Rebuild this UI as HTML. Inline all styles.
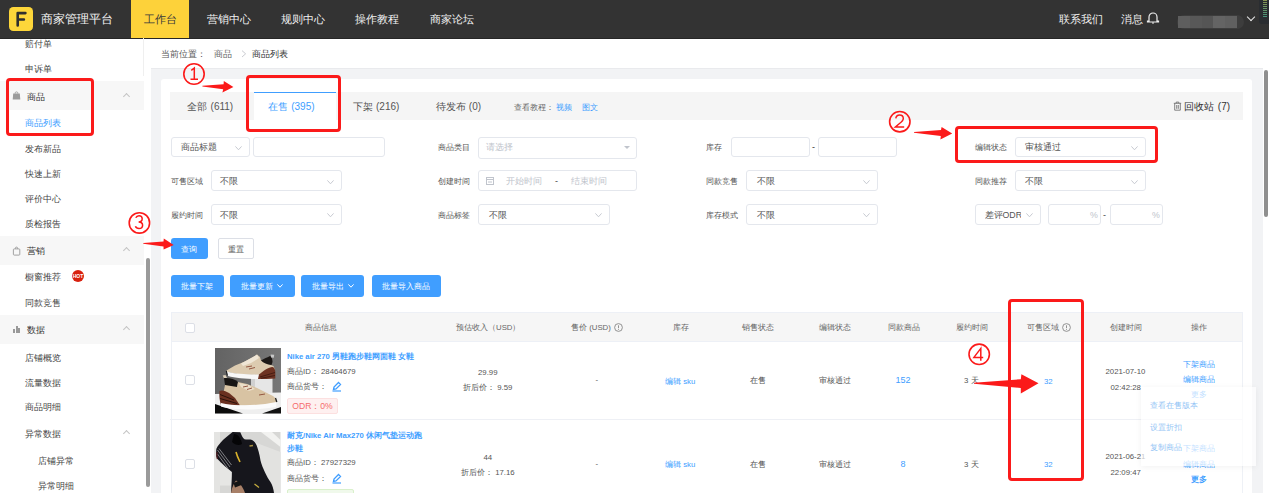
<!DOCTYPE html>
<html><head><meta charset="utf-8">
<style>
*{box-sizing:border-box;margin:0;padding:0}
html,body{width:1269px;height:493px;overflow:hidden;background:#fff}
body{position:relative;font-family:"Liberation Sans",sans-serif;color:#333}
.a{position:absolute}
.t{position:absolute;white-space:nowrap;line-height:12px;height:12px}
.hd{left:0;top:0;width:1269px;height:38px;background:#333}
.nav{color:#f2f2f2;font-size:10.6px;line-height:14px;height:14px;top:12px}
.sb{font-size:8.8px;color:#444}
.sbh{left:0;width:144px;background:#f7f7f7}
.chev{position:absolute;width:5px;height:5px;border-left:1px solid #c4c4c4;border-top:1px solid #c4c4c4;transform:rotate(45deg)}
.chevd{position:absolute;width:6px;height:6px;border-right:1px solid #b5b5b5;border-bottom:1px solid #b5b5b5;transform:rotate(45deg)}
.lb{font-size:8.1px;color:#555;margin-top:0.8px}
.inp{position:absolute;border:1px solid #e4e7ed;border-radius:3px;background:#fff;height:21px}
.sel{font-size:8.8px;color:#555}
.ph{color:#c0c4cc}
.btn{position:absolute;background:#409eff;border-radius:3px;color:#fff;font-size:7.9px;text-align:center;line-height:23px;height:21px}
.th{font-size:7.8px;color:#666}
.td{font-size:7.8px;color:#555}
.lk{color:#409eff}
.red{position:absolute;border:3px solid #fb1a1a;border-radius:4px}
</style></head><body>

<!-- HEADER -->
<div class="a hd" style="height:38.5px"></div>
<div class="a" style="left:0;top:37.5px;width:1269px;height:1px;background:#262626"></div>
<div class="a" style="left:9.3px;top:7px;width:23.5px;height:23.8px;background:#fdd63a;border-radius:4.3px"></div>
<svg class="a" style="left:0;top:0" width="40" height="38" viewBox="0 0 40 38"><path d="M17.7 25.5 V13.1 H25.4 M17.7 19.5 H23.9" fill="none" stroke="#2f2f2f" stroke-width="2.6" stroke-linecap="round" stroke-linejoin="round"/></svg>
<div class="t" style="left:41px;top:12px;height:14px;line-height:14px;font-size:12.2px;color:#f5f5f5">商家管理平台</div>
<div class="a" style="left:131px;top:0;width:58px;height:38px;background:#fdd23a"></div>
<div class="t nav" style="left:144px;color:#3a3a3a">工作台</div>
<div class="t nav" style="left:207px">营销中心</div>
<div class="t nav" style="left:281px">规则中心</div>
<div class="t nav" style="left:355px">操作教程</div>
<div class="t nav" style="left:430px">商家论坛</div>
<div class="t nav" style="left:1059px">联系我们</div>
<div class="t nav" style="left:1121px">消息</div>
<svg class="a" style="left:1146px;top:11px" width="14" height="14" viewBox="0 0 14 14"><path d="M3 10 V6 A4 4 0 0 1 11 6 V10 H12.5 V11 H1.5 V10 Z" fill="none" stroke="#eee" stroke-width="1.2"/><path d="M6 12 H8" stroke="#eee" stroke-width="1.2"/></svg>
<div class="a" style="left:1177px;top:15px;width:67px;height:14px;border-radius:7px;background:#3d3d3d"></div>
<div class="a" style="left:1178px;top:16px;width:59px;height:12px;background:linear-gradient(90deg,#5e5e5e 0,#5e5e5e 20%,#585858 20%,#585858 40%,#555 40%,#555 60%,#646464 60%,#646464 80%,#606060 80%)"></div>
<div class="chevd" style="left:1248px;top:14px;border-color:#e8e8e8;border-width:0 1.5px 1.5px 0;width:6px;height:6px"></div>
<div class="a" style="left:1259px;top:0;width:12px;height:24px;background:#2a2d31;border-radius:0 0 0 3px"></div>
<div class="a" style="left:1263px;top:0;width:4px;height:18px;background:linear-gradient(180deg,#8a9450,#3f8f7a)"></div><div class="a" style="left:1263px;top:0;width:4px;height:18px;background:repeating-linear-gradient(180deg,transparent 0,transparent 1px,#2a2d31 1px,#2a2d31 2px)"></div>

<!-- SIDEBAR --><div class="a" style="left:143px;top:38px;width:1px;height:38px;background:#efefef"></div>
<div class="t sb" style="left:25px;top:38px">赔付单</div>
<div class="t sb" style="left:25px;top:63px">申诉单</div>
<div class="a sbh" style="top:81px;height:29px"></div>
<div class="t sb" style="left:26.5px;top:90.5px;color:#333">商品</div>
<div class="chev" style="left:124px;top:94.3px"></div>
<div class="t sb lk" style="left:25px;top:117px">商品列表</div>
<div class="t sb" style="left:25px;top:143px">发布新品</div>
<div class="t sb" style="left:25px;top:168px">快速上新</div>
<div class="t sb" style="left:25px;top:193px">评价中心</div>
<div class="t sb" style="left:25px;top:218px">质检报告</div>
<div class="a sbh" style="top:236px;height:29px"></div>
<div class="t sb" style="left:26.7px;top:244.5px;color:#333">营销</div>
<div class="chev" style="left:124px;top:248.3px"></div>
<div class="t sb" style="left:25px;top:271px">橱窗推荐</div>
<div class="a" style="left:72px;top:270px;width:12px;height:12px;border-radius:50%;background:#d8210f"></div>
<div class="t" style="left:72px;top:271px;width:12px;height:10px;line-height:10px;font-size:5px;color:#fff;text-align:center;font-weight:bold">HOT</div>
<div class="t sb" style="left:25px;top:297px">同款竞售</div>
<div class="a sbh" style="top:315px;height:29px"></div>
<div class="t sb" style="left:26.7px;top:324px;color:#333">数据</div>
<div class="chev" style="left:124px;top:327.3px"></div>
<div class="t sb" style="left:25px;top:352px">店铺概览</div>
<div class="t sb" style="left:25px;top:377px">流量数据</div>
<div class="t sb" style="left:25px;top:401px">商品明细</div>
<div class="t sb" style="left:25px;top:428px">异常数据</div>
<div class="chev" style="left:124px;top:431.3px"></div>
<div class="t sb" style="left:38px;top:455px">店铺异常</div>
<div class="t sb" style="left:38px;top:480px">异常明细</div>
<div class="a" style="left:145.5px;top:258px;width:4px;height:229px;border-radius:2px;background:#9a9a9a"></div>



<svg class="a" style="left:12px;top:91px" width="9" height="9" viewBox="0 0 9 9"><path d="M3.2 2.6 V1.8 C3.2 0.6 5.8 0.6 5.8 1.8 V2.6" fill="none" stroke="#999" stroke-width="0.9"/><path d="M1.2 2.6 H7.8 L8.3 8.4 H0.7Z" fill="#9b9b9b"/></svg>
<svg class="a" style="left:12px;top:245.5px" width="9" height="10" viewBox="0 0 9 10"><path d="M3.4 2.8 V2 C3.4 0.8 5.6 0.8 5.6 2 V2.8" fill="none" stroke="#999" stroke-width="0.9"/><rect x="1.4" y="2.9" width="6.4" height="6.2" rx="0.8" fill="none" stroke="#999" stroke-width="0.9"/></svg>
<div class="a" style="left:13px;top:329px;width:1.8px;height:4px;background:#999"></div>
<div class="a" style="left:15.8px;top:326px;width:1.8px;height:7px;background:#999"></div>
<div class="a" style="left:18.2px;top:328px;width:1.8px;height:5px;background:#999"></div>

<div class="a" style="left:151px;top:68px;width:1112px;height:425px;background:#f2f3f5"></div>
<div class="t" style="left:161px;top:48px;font-size:8.8px;color:#555">当前位置：</div>
<div class="t" style="left:214px;top:48px;font-size:8.8px;color:#666">商品</div>
<svg class="a" style="left:241px;top:50px" width="6" height="8" viewBox="0 0 6 8"><path d="M1 0.6 L4.6 3.8 L1 7" fill="none" stroke="#c4c6cc" stroke-width="0.9"/></svg>
<div class="t" style="left:252px;top:48px;font-size:8.8px;color:#333">商品列表</div>
<div class="a" style="left:151px;top:68px;width:1112px;height:1px;background:#e9eaed"></div>
<div class="a" style="left:161px;top:79px;width:1091px;height:414px;background:#fff;border-radius:3px 3px 0 0"></div>
<div class="a" style="left:1263px;top:68px;width:6px;height:425px;background:#fff"></div>
<div class="a" style="left:1263.5px;top:70px;width:4px;height:147px;border-radius:2px;background:#8f8f8f"></div>

<!-- tabs -->
<div class="a" style="left:170px;top:92px;width:1073px;height:28px;background:#f5f5f5"></div>
<div class="a" style="left:254px;top:92px;width:82px;height:28px;background:#fff;border-top:1.5px solid #409eff"></div>
<div class="t" style="left:187px;top:100.5px;font-size:9.5px;color:#555">全部</div><div class="t" style="left:210.6px;top:100.5px;font-size:10px;color:#555">(611)</div>
<div class="t" style="left:267.5px;top:100.5px;font-size:9.5px;color:#409eff">在售</div><div class="t" style="left:291.2px;top:100.5px;font-size:10px;color:#409eff">(395)</div>
<div class="t" style="left:352.5px;top:100.5px;font-size:9.5px;color:#555">下架</div><div class="t" style="left:376px;top:100.5px;font-size:10px;color:#555">(216)</div>
<div class="t" style="left:436px;top:100.5px;font-size:9.5px;color:#555">待发布</div><div class="t" style="left:468.8px;top:100.5px;font-size:10px;color:#555">(0)</div>
<div class="t" style="left:514px;top:100.5px;font-size:8.3px;color:#666">查看教程：</div>
<div class="t lk" style="left:556px;top:100.5px;font-size:8.3px">视频</div>
<div class="t lk" style="left:581.5px;top:100.5px;font-size:8.3px">图文</div>
<svg class="a" style="left:1172.5px;top:101px" width="9" height="10" viewBox="0 0 9 10"><path d="M0.8 2.3H8.2M3.2 2.3V1.1H5.8V2.3M1.7 2.3V9.2H7.3V2.3M3.7 4V7.8M5.3 4V7.8" fill="none" stroke="#666" stroke-width="0.8"/></svg>
<div class="t" style="left:1184px;top:100.5px;font-size:9.5px;color:#333">回收站</div><div class="t" style="left:1217.8px;top:100.5px;font-size:10px;color:#333">(7)</div>

<!-- filters row1 -->
<div class="inp" style="left:170.5px;top:136.5px;width:79px;height:20.5px"></div>
<div class="t sel" style="left:181px;top:141px">商品标题</div>
<svg class="a" style="left:235.2px;top:145.7px;overflow:visible" width="7" height="4.2" viewBox="0 0 7 4.2"><path d="M0.4 0.4 L3.5 3.8000000000000003 L6.6 0.4" fill="none" stroke="#c0c4cc" stroke-width="0.9"/></svg>
<div class="inp" style="left:253px;top:136.5px;width:132px;height:20.5px"></div>
<div class="t lb" style="left:438px;top:141px">商品类目</div>
<div class="inp" style="left:478px;top:136.5px;width:159px;height:22px"></div>
<div class="t sel ph" style="left:486px;top:141px">请选择</div>
<div class="a" style="left:624px;top:146px;width:0;height:0;border-left:3px solid transparent;border-right:3px solid transparent;border-top:3.5px solid #c0c4cc"></div>
<div class="t lb" style="left:706px;top:141px">库存</div>
<div class="inp" style="left:730.5px;top:136.5px;width:79px;height:20.5px"></div>
<div class="t" style="left:812px;top:141px;font-size:9px">-</div>
<div class="inp" style="left:818px;top:136.5px;width:79px;height:20.5px"></div>
<div class="t lb" style="left:975px;top:141px">编辑状态</div>
<div class="inp" style="left:1014.5px;top:136.5px;width:131px;height:20.5px"></div>
<div class="t sel" style="left:1025px;top:141px">审核通过</div>
<svg class="a" style="left:1131.1px;top:145.7px;overflow:visible" width="7" height="4.2" viewBox="0 0 7 4.2"><path d="M0.4 0.4 L3.5 3.8000000000000003 L6.6 0.4" fill="none" stroke="#c0c4cc" stroke-width="0.9"/></svg>

<!-- filters row2 -->
<div class="t lb" style="left:170.5px;top:175px">可售区域</div>
<div class="inp" style="left:210.5px;top:170.3px;width:131px;height:21px"></div>
<div class="t sel" style="left:220px;top:175px">不限</div>
<svg class="a" style="left:327px;top:179.5px;overflow:visible" width="7" height="4.2" viewBox="0 0 7 4.2"><path d="M0.4 0.4 L3.5 3.8000000000000003 L6.6 0.4" fill="none" stroke="#c0c4cc" stroke-width="0.9"/></svg>
<div class="t lb" style="left:438px;top:175px">创建时间</div>
<div class="inp" style="left:478px;top:170.3px;width:159px;height:21px"></div>
<svg class="a" style="left:486px;top:177px" width="8" height="8" viewBox="0 0 8 8"><rect x="0.5" y="0.5" width="7" height="7" fill="none" stroke="#c0c4cc"/><path d="M0.5 2.5H7.5M2 5H6" stroke="#c0c4cc"/></svg>
<div class="t sel ph" style="left:506px;top:175px">开始时间</div>
<div class="t" style="left:555px;top:175px;font-size:9px;color:#444">-</div>
<div class="t sel ph" style="left:571px;top:175px">结束时间</div>
<div class="t lb" style="left:706px;top:175px">同款竞售</div>
<div class="inp" style="left:746px;top:170.3px;width:131.5px;height:21px"></div>
<div class="t sel" style="left:757px;top:175px">不限</div>
<svg class="a" style="left:863px;top:179.5px;overflow:visible" width="7" height="4.2" viewBox="0 0 7 4.2"><path d="M0.4 0.4 L3.5 3.8000000000000003 L6.6 0.4" fill="none" stroke="#c0c4cc" stroke-width="0.9"/></svg>
<div class="t lb" style="left:975px;top:175px">同款推荐</div>
<div class="inp" style="left:1014.5px;top:170.3px;width:131px;height:21px"></div>
<div class="t sel" style="left:1025px;top:175px">不限</div>
<svg class="a" style="left:1131.1px;top:179.5px;overflow:visible" width="7" height="4.2" viewBox="0 0 7 4.2"><path d="M0.4 0.4 L3.5 3.8000000000000003 L6.6 0.4" fill="none" stroke="#c0c4cc" stroke-width="0.9"/></svg>

<!-- filters row3 -->
<div class="t lb" style="left:170.5px;top:209px">履约时间</div>
<div class="inp" style="left:210.5px;top:204.2px;width:131px;height:21px"></div>
<div class="t sel" style="left:220px;top:209px">不限</div>
<svg class="a" style="left:327px;top:213.4px;overflow:visible" width="7" height="4.2" viewBox="0 0 7 4.2"><path d="M0.4 0.4 L3.5 3.8000000000000003 L6.6 0.4" fill="none" stroke="#c0c4cc" stroke-width="0.9"/></svg>
<div class="t lb" style="left:438px;top:209px">商品标签</div>
<div class="inp" style="left:478px;top:204.2px;width:131.5px;height:21px"></div>
<div class="t sel" style="left:489px;top:209px">不限</div>
<svg class="a" style="left:595px;top:213.4px;overflow:visible" width="7" height="4.2" viewBox="0 0 7 4.2"><path d="M0.4 0.4 L3.5 3.8000000000000003 L6.6 0.4" fill="none" stroke="#c0c4cc" stroke-width="0.9"/></svg>
<div class="t lb" style="left:706px;top:209px">库存模式</div>
<div class="inp" style="left:746px;top:204.2px;width:131.5px;height:21px"></div>
<div class="t sel" style="left:757px;top:209px">不限</div>
<svg class="a" style="left:863px;top:213.4px;overflow:visible" width="7" height="4.2" viewBox="0 0 7 4.2"><path d="M0.4 0.4 L3.5 3.8000000000000003 L6.6 0.4" fill="none" stroke="#c0c4cc" stroke-width="0.9"/></svg>
<div class="inp" style="left:974.5px;top:204.2px;width:66px;height:21px"></div>
<div class="t sel" style="left:984.5px;top:209px;width:36px;overflow:hidden">差评ODR</div>
<svg class="a" style="left:1026px;top:213.4px;overflow:visible" width="7" height="4.2" viewBox="0 0 7 4.2"><path d="M0.4 0.4 L3.5 3.8000000000000003 L6.6 0.4" fill="none" stroke="#c0c4cc" stroke-width="0.9"/></svg>
<div class="inp" style="left:1047.5px;top:204.2px;width:53px;height:21px"></div>
<div class="t sel ph" style="left:1090px;top:209px">%</div>
<div class="t" style="left:1103px;top:209px;font-size:9px;color:#444">-</div>
<div class="inp" style="left:1109.5px;top:204.2px;width:53px;height:21px"></div>
<div class="t sel ph" style="left:1152px;top:209px">%</div>

<!-- buttons -->
<div class="btn" style="left:170.5px;top:238px;width:37px">查询</div>
<div class="a" style="left:217.5px;top:238px;width:36.5px;height:21px;border:1px solid #dcdfe6;border-radius:2px"></div>
<div class="t" style="left:217.5px;top:243px;width:36.5px;text-align:center;font-size:7.9px;color:#555;margin-top:1px">重置</div>
<div class="btn" style="left:170.5px;top:275px;width:53px;height:21.5px">批量下架</div>
<div class="btn" style="left:230px;top:275px;width:64.5px;height:21.5px;text-align:left;padding-left:11px">批量更新</div>
<svg class="a" style="left:277.1px;top:284px;overflow:visible" width="6" height="3.6" viewBox="0 0 6 3.6"><path d="M0.4 0.4 L3.0 3.2 L5.6 0.4" fill="none" stroke="#fff" stroke-width="1"/></svg>
<div class="btn" style="left:301px;top:275px;width:62.5px;height:21.5px;text-align:left;padding-left:11px">批量导出</div>
<svg class="a" style="left:347.8px;top:284px;overflow:visible" width="6" height="3.6" viewBox="0 0 6 3.6"><path d="M0.4 0.4 L3.0 3.2 L5.6 0.4" fill="none" stroke="#fff" stroke-width="1"/></svg>
<div class="btn" style="left:372px;top:275px;width:68.5px;height:21.5px">批量导入商品</div>

<div class="a" style="left:170.5px;top:312px;width:1072px;height:30px;background:#f6f6f6;border:1px solid #edf0f6"></div>
<div class="a" style="left:170.5px;top:341px;width:1px;height:152px;background:#eef1f6"></div>
<div class="a" style="left:1241.5px;top:341px;width:1px;height:152px;background:#eef1f6"></div>
<div class="a" style="left:185px;top:322.5px;width:10px;height:10px;border:1px solid #dcdfe6;border-radius:2px;background:#fff"></div>
<div class="t th" style="left:305px;top:321.8px">商品信息</div>
<div class="t th" style="left:456px;top:321.8px">预估收入（USD）</div>
<div class="t th" style="left:571px;top:321.8px">售价 (USD)</div>
<svg class="a" style="left:614px;top:323px" width="9" height="9" viewBox="0 0 9 9"><circle cx="4.5" cy="4.5" r="3.9" fill="none" stroke="#888" stroke-width="0.9"/><path d="M4.5 2.3V5.2M4.5 6.1V6.9" stroke="#888" stroke-width="0.9"/></svg>
<div class="t th" style="left:673px;top:321.8px">库存</div>
<div class="t th" style="left:742px;top:321.8px">销售状态</div>
<div class="t th" style="left:818.5px;top:321.8px">编辑状态</div>
<div class="t th" style="left:887.5px;top:321.8px">同款商品</div>
<div class="t th" style="left:956px;top:321.8px">履约时间</div>
<div class="t th" style="left:1027px;top:321.8px">可售区域</div>
<svg class="a" style="left:1061.5px;top:323px" width="9" height="9" viewBox="0 0 9 9"><circle cx="4.5" cy="4.5" r="3.9" fill="none" stroke="#888" stroke-width="0.9"/><path d="M4.5 2.3V5.2M4.5 6.1V6.9" stroke="#888" stroke-width="0.9"/></svg>
<div class="t th" style="left:1110px;top:321.8px">创建时间</div>
<div class="t th" style="left:1191px;top:321.8px">操作</div>

<!-- row1 -->
<div class="a" style="left:185px;top:375px;width:10px;height:10px;border:1px solid #dcdfe6;border-radius:2px;background:#fff"></div>
<svg class="a" style="left:214.5px;top:348px" width="66" height="66" viewBox="0 0 66 66">
<defs><linearGradient id="g1" x1="0" y1="0" x2="1" y2="0"><stop offset="0" stop-color="#636363"/><stop offset="1" stop-color="#777"/></linearGradient></defs>
<rect width="66" height="66" fill="url(#g1)"/>
<path d="M0 46 L36 45 L66 44.5 L66 66 L0 66Z" fill="#efefef"/>
<path d="M36 30 L57.5 30 L57.5 45 L36 45.5Z" fill="#e6e6e6"/>
<path d="M36 30 L40 30 L40 45.3 L36 45.5Z" fill="#d0d0d0"/>
<path d="M0 56 L28 65.5 L0 65.5Z" fill="#0c0c0c"/>
<path d="M47 65.5 L66 59 L66 65.5Z" fill="#121212"/>
<path d="M11.5 22.5 L20 17.5 L30 13.5 L38 9 L42 6.5 L45 9 L46 12.5 L56 17 L58.5 18 L60 22 L44 27 L25 26.5 L12 24Z" fill="#dccbb0"/>
<path d="M26 15.5 L38 9 L42 6.5 L44 10 L36 15 L28 18Z" fill="#efe6d6"/>
<path d="M31 19 L37 18 M34 21 L40 19.5" stroke="#8b4a36" stroke-width="0.9"/>
<path d="M46 12.5 C48 11 52 9.5 55 8 C56.5 8.5 57.5 11 57.5 14 L56.5 17 C52 16.5 48.5 15 46 12.5Z" fill="#1d1917"/>
<path d="M55.6 6.6 L59.2 6.8 L58.8 9.7 L56.2 9.6Z" fill="#c8c8c8"/>
<path d="M42 28 C46 25 52 19.5 57 19 C59 19 60.3 21 60.3 24 L60.3 30.5 C55 31 48 31 42 31Z" fill="#6e3322"/>
<path d="M45 29 L60 24.5 M46 30.3 L60 27.5" stroke="#3a170e" stroke-width="0.8"/>
<path d="M11.8 23.5 C20 26 32 26.5 44 26.5 L43 31 C32 31 20 30 13 28Z" fill="#f7f7f7"/>
<path d="M11.3 22.8 L12.3 27.5" stroke="#1a1a1a" stroke-width="1.1"/>
<path d="M7.7 27.5 L10.5 27 L12 30 L9 30.5Z" fill="#ddd0ba"/>
<path d="M10 37 L9 30 C14 29.5 20 31 23 34 L22 39 C17 40 12 39.5 10 37Z" fill="#171412"/>
<path d="M10 37 L22 39 L23 34 L32 36 L42 40 L52 45 L58 48 L61.4 51 L61.5 54.5 L44 58 L25 57.5 L8 47Z" fill="#d8c3a3"/>
<path d="M24 35 L34 37 L40 41 L34 43 L26 39Z" fill="#ebdfca"/>
<path d="M28 39 L33 38 M32 41.5 L37 40 M44 47 L50 46" stroke="#8b4a36" stroke-width="0.9"/>
<path d="M4.5 43 C8 41 14 44 20 50 L25 57.5 L6 57 C4.5 53 4 47 4.5 43Z" fill="#6a3020"/>
<path d="M5 46.5 L19 52 M5 50.5 L22 55.5" stroke="#2c120a" stroke-width="1"/>
<path d="M6 55 C18 58 40 58.5 61.5 54 L61 59 C40 62.5 18 62 6 58.5Z" fill="#fbfbfb"/>
<path d="M60.5 50 L61.8 54" stroke="#222" stroke-width="1.3"/>
</svg>
<div class="t" style="left:287px;top:351px;font-size:7.7px;color:#409eff;font-weight:bold">Nike air 270 男鞋跑步鞋网面鞋 女鞋</div>
<div class="t td" style="left:287px;top:365.5px">商品ID：&nbsp;28464679</div>
<div class="t td" style="left:287px;top:381px">商品货号：</div>
<svg class="a" style="left:331px;top:381px" width="11" height="11" viewBox="0 0 11 11"><path d="M2.5 8.5 L3 6 L7.5 1.5 L9.5 3.5 L5 8 Z" fill="none" stroke="#409eff" stroke-width="1.3"/><path d="M1.5 10 H10" stroke="#409eff" stroke-width="1.2"/></svg>
<div class="a" style="left:287px;top:398px;width:51px;height:16px;background:#fef0f0;border:1px solid #fce0e0;border-radius:2px"></div>
<div class="t" style="left:287px;top:400px;width:51px;text-align:center;font-size:8.6px;color:#f56c6c">ODR：0%</div>
<div class="t td" style="left:478px;top:366.5px">29.99</div>
<div class="t td" style="left:463px;top:382px">折后价：&nbsp;9.59</div>
<div class="t td" style="left:595.5px;top:374px">-</div>
<div class="t td lk" style="left:665px;top:375.8px">编辑 sku</div>
<div class="t td" style="left:749.5px;top:374.8px">在售</div>
<div class="t td" style="left:818.5px;top:374.8px">审核通过</div>
<div class="t td lk" style="left:895.5px;top:374px;font-size:9px">152</div>
<div class="t td" style="left:964px;top:374.5px">3 天</div>
<div class="t td lk" style="left:1044px;top:375.7px">32</div>
<div class="t td" style="left:1105.5px;top:366px">2021-07-10</div>
<div class="t td" style="left:1110.5px;top:381.5px">02:42:28</div>
<div class="t td lk" style="left:1183px;top:359px">下架商品</div>
<div class="t td lk" style="left:1183px;top:374px">编辑商品</div>
<div class="t td lk" style="left:1191px;top:388.5px">更多</div>
<div class="a" style="left:170px;top:419px;width:1072.5px;height:1px;background:#eef0f5"></div>

<!-- row2 -->
<div class="a" style="left:185px;top:459px;width:10px;height:10px;border:1px solid #dcdfe6;border-radius:2px;background:#fff"></div>
<svg class="a" style="left:214.2px;top:432px" width="66.5" height="61" viewBox="0 0 66.5 61">
<rect width="66.5" height="61" fill="#d7d7d5"/>
<path d="M47 0 L58 0 L66.5 8 L66.5 15 Z" fill="#f2f2f0"/>
<path d="M40 10 L66.5 20 L66.5 61 L50 61Z" fill="#e2e2e0"/>
<path d="M4.5 31 L19 31 L19 53.5 L4.5 53.5Z" fill="#e6e6e4"/>
<path d="M0 0 L6 0 L6 61 L0 61Z" fill="#e4e4e2"/>
<path d="M18.6 0 L26.3 0.3 C27.5 3 28.5 6 30.5 7.2 C32.5 7.8 34.5 7.4 36.4 7.6 C39 8 41 10 42.5 13 C44 17 45.5 22 46.5 28.4 C48.5 36 53 45 56.5 50 C58.5 53 59.5 57 60 61 L17 61 C17.5 52 17.9 45 17.9 40 C14 37 8 32 3.2 26.8 C2 22 2 19 2.4 16.8 C5 11 12 5 18.6 0Z" fill="#16161c"/>
<path d="M20 2 C24 2 27 6 28 12 C25 14 21 13 18 10Z" fill="#050507"/>
<path d="M3.5 18 L16 35 M5 16.5 L17.5 33 M3.5 22 L14 36.5" stroke="#8a8a8e" stroke-width="0.9"/>
<path d="M3 20 C2.5 24 3 26 3.5 27" stroke="#4a1e22" stroke-width="1.5" fill="none"/>
<path d="M22 20 C23 24 25 28 26 30" stroke="#d9b22c" stroke-width="1.6" fill="none"/>
<path d="M35.5 14 L39 13.5" stroke="#a89040" stroke-width="1.6"/>
<path d="M40.5 52 L45 55.5" stroke="#c9b040" stroke-width="1.2"/>
<path d="M17 61 C18 55 20 51 22 48.5 C25 50 29 55 31 61 Z" fill="#a88068"/>
<path d="M19.5 51 L25.5 48.5 L27.5 53 L21 55.5 Z" fill="#141414"/>
</svg>
<div class="t" style="left:287px;top:429.5px;font-size:7.7px;color:#409eff;font-weight:bold">耐克/Nike Air Max270 休闲气垫运动跑</div>
<div class="t" style="left:287px;top:443px;font-size:7.7px;color:#409eff;font-weight:bold">步鞋</div>
<div class="t td" style="left:287px;top:456.5px">商品ID：&nbsp;27927329</div>
<div class="t td" style="left:287px;top:472.5px">商品货号：</div>
<svg class="a" style="left:331px;top:472.5px" width="11" height="11" viewBox="0 0 11 11"><path d="M2.5 8.5 L3 6 L7.5 1.5 L9.5 3.5 L5 8 Z" fill="none" stroke="#409eff" stroke-width="1.3"/><path d="M1.5 10 H10" stroke="#409eff" stroke-width="1.2"/></svg>
<div class="a" style="left:287px;top:489px;width:67px;height:16px;background:#f0f9eb;border:1px solid #d9f0cb;border-radius:2px"></div>
<div class="t td" style="left:483.5px;top:451.5px">44</div>
<div class="t td" style="left:461px;top:467px">折后价：&nbsp;17.16</div>
<div class="t td" style="left:595.5px;top:458px">-</div>
<div class="t td lk" style="left:665px;top:458.5px">编辑 sku</div>
<div class="t td" style="left:749.5px;top:459px">在售</div>
<div class="t td" style="left:818.5px;top:459px">审核通过</div>
<div class="t td lk" style="left:900.5px;top:458px;font-size:9px">8</div>
<div class="t td" style="left:964px;top:459px">3 天</div>
<div class="t td lk" style="left:1044px;top:458.5px">32</div>
<div class="t td" style="left:1105.5px;top:451px">2021-06-21</div>
<div class="t td" style="left:1110.5px;top:466.5px">22:09:47</div>
<div class="t td lk" style="left:1183px;top:442.5px">下架商品</div>
<div class="t td lk" style="left:1183px;top:458.5px">编辑商品</div>
<div class="t td lk" style="left:1191px;top:474px;font-weight:bold">更多</div>

<!-- popup -->
<div class="a" style="left:1141px;top:387px;width:115px;height:79px;background:rgba(255,255,255,0.68);box-shadow:0 1px 6px rgba(0,0,0,0.06)"></div>
<div class="t td" style="left:1150px;top:400px;color:#95c5f5">查看在售版本</div>
<div class="t td" style="left:1150px;top:422px;color:#95c5f5">设置折扣</div>
<div class="t td" style="left:1150px;top:442.3px;color:#95c5f5">复制商品</div>

<!-- ANNOTATIONS -->
<div class="red" style="left:5.5px;top:78.2px;width:88.5px;height:57.8px;border-width:3.4px"></div>
<div class="red" style="left:245.7px;top:75.4px;width:95px;height:57px;border-width:3.5px"></div>
<div class="red" style="left:955px;top:125.7px;width:203px;height:37.5px;border-width:3.3px"></div>
<div class="red" style="left:1008.3px;top:299.1px;width:76.2px;height:181.5px;border-width:3.6px"></div>
<svg class="a" style="left:0;top:0" width="1269" height="493" viewBox="0 0 1269 493">
<g fill="none" stroke="#fb1a1a" stroke-width="1.6">
<circle cx="194" cy="74" r="10.2"/>
<circle cx="899.8" cy="121.7" r="10.2"/>
<circle cx="139.4" cy="222.9" r="10.2"/>
<circle cx="979.2" cy="354.3" r="10.2"/>
</g>
<g fill="#fb1a1a">
<path d="M202.4 85.8 L223.6 84.3 L223.8 81 L233.4 87 L222.4 92.4 L223.2 89.2 L202.4 86.6Z"/>
<path d="M914 132 L941 130 L941.6 126.9 L952.2 133.4 L940.4 139.5 L940.8 136 L914 132.8Z"/>
<path d="M143.3 243 L163.5 241.5 L163.8 238.4 L173.7 245 L163.6 249.6 L163.5 246.5 L143.3 243.7Z"/>
<path d="M974 382.7 L1020.8 379.2 L1021.4 374.3 L1038.5 383.2 L1020.8 393.5 L1020.8 388 L974 383.7Z"/>
</g>
<g fill="none" stroke="#fb1a1a" stroke-width="1.5">
<path d="M191.3 70.4 L194.3 68 V79.2 M190.5 79.2 H198"/>
<path d="M895.8 118.3 C896.2 115.8 898 115 899.6 115 C901.8 115 903.3 116.5 903.3 118.5 C903.3 120.6 901.5 122 899.5 123.5 L895.4 127 H904.2"/>
<path d="M135.8 217.8 C136.5 216.2 137.8 215.7 139 215.7 C141 215.7 142.2 217 142.2 218.8 C142.2 220.8 140.6 221.9 138.6 221.9 C141 221.9 142.6 223.3 142.6 225.3 C142.6 227.5 141 228.6 139 228.6 C137.4 228.6 136 227.9 135.4 226.3"/>
<path d="M980.8 360.7 V348.4 L973.9 357.4 H983.2"/>
</g>
</svg>


</body></html>
